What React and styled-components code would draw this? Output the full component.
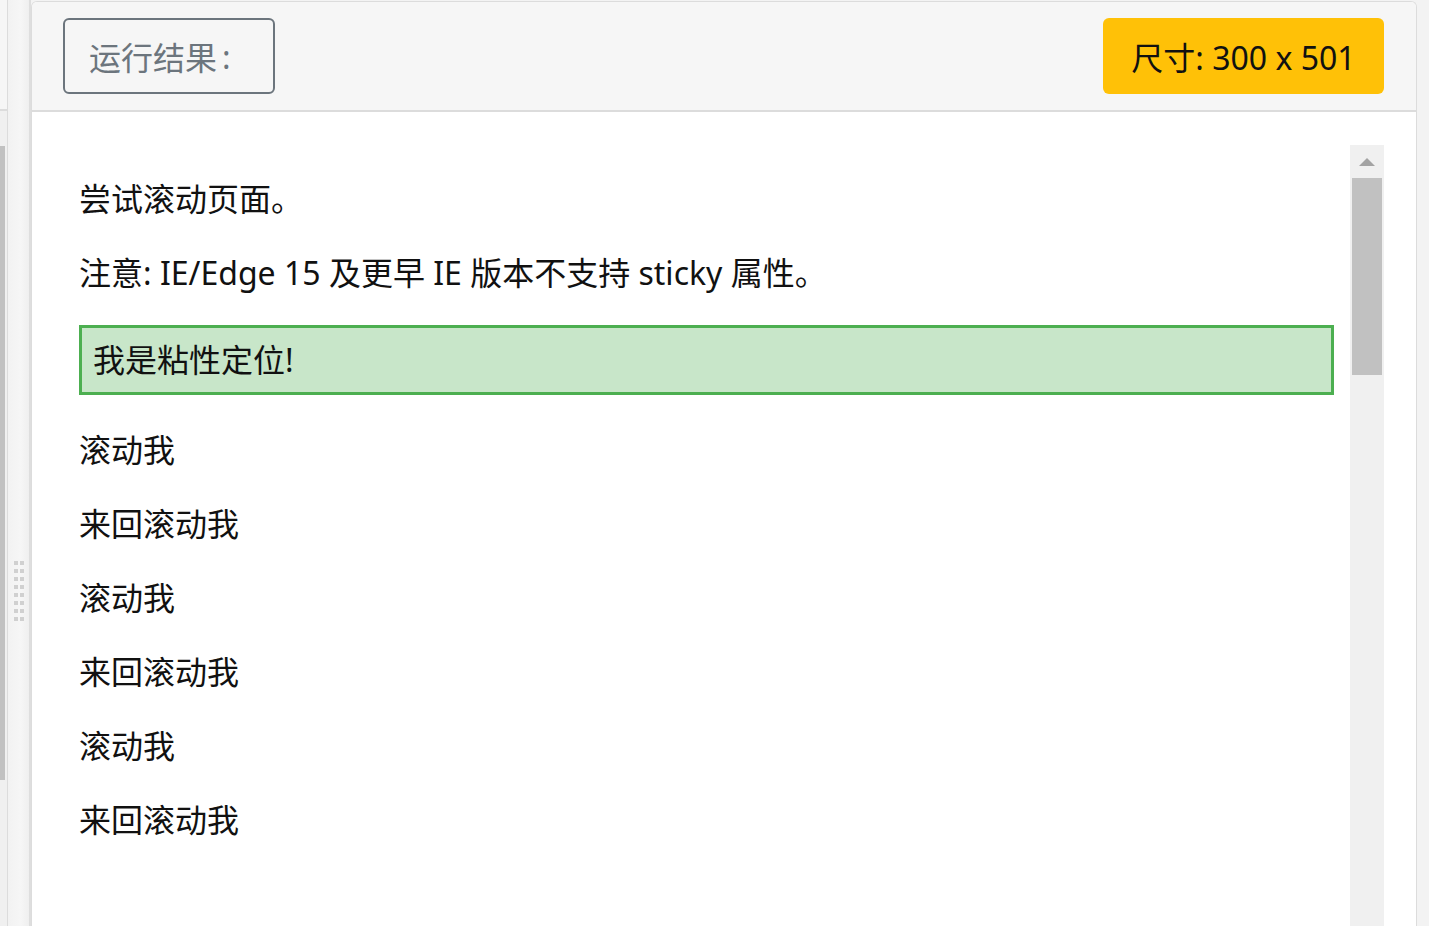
import React from 'react'
import styled, { createGlobalStyle } from 'styled-components'

const GlobalStyle = createGlobalStyle`
    html, body {
        margin: 0;
        padding: 0;
        background: #f3f3f3;
        font-family: "Noto Sans", "Noto Sans CJK SC", sans-serif;
    }
`

const rows = ['滚动我', '来回滚动我', '滚动我', '来回滚动我', '滚动我', '来回滚动我']

function App() {
    return (
        <Page>
            <GlobalStyle />
            <LeftPane>
                <LeftHead />
                <LeftTrack>
                    <LeftThumb />
                </LeftTrack>
            </LeftPane>
            <Gutter>
                <Grip>
                    {Array.from({ length: 16 }).map((_, i) => <Dot key={i} />)}
                </Grip>
            </Gutter>
            <Panel>
                <Header>
                    <ResultButton>运行结果<Colon>:</Colon></ResultButton>
                    <SizeBadge>尺寸: 300 x 501</SizeBadge>
                </Header>
                <Body>
                    <Frame>
                        <Doc>
                            <Para>尝试滚动页面。</Para>
                            <Para>注意: IE/Edge 15 及更早 IE 版本不支持 sticky 属性。</Para>
                            <Sticky>我是粘性定位!</Sticky>
                            {rows.map((r, i) => <Para key={i}>{r}</Para>)}
                        </Doc>
                        <Scrollbar>
                            <ArrowUp>
                                <svg width="16" height="9" viewBox="0 0 16 9">
                                    <polygon points="0,9 8,1 16,9" fill="#a3a3a3" />
                                </svg>
                            </ArrowUp>
                            <Thumb />
                        </Scrollbar>
                    </Frame>
                </Body>
            </Panel>
            <RightPane />
        </Page>
    )
}

export default App

const Page = styled.div`
    display: flex;
    height: 926px;
    overflow: hidden;
    background: #f3f3f3;
`

const LeftPane = styled.div`
    display: flex;
    flex-direction: column;
    width: 7px;
    background: #f0f0f0;
    border-right: 1px solid #dcdcdc;
`

const LeftHead = styled.div`
    height: 109px;
    background: #f6f6f6;
    border-bottom: 2px solid #dcdcdc;
`

const LeftTrack = styled.div`
    flex: 1;
    padding-top: 35px;
`

const LeftThumb = styled.div`
    width: 5px;
    height: 634px;
    background: #c1c1c1;
`

const Gutter = styled.div`
    display: flex;
    align-items: center;
    justify-content: center;
    box-sizing: border-box;
    width: 23px;
    background: linear-gradient(to right, #f2f2f2, #f6f6f6 60%, #efefef);
    border-right: 2px solid #dedede;
`

const Grip = styled.div`
    display: grid;
    grid-template-columns: 4px 4px;
    grid-auto-rows: 4px;
    column-gap: 2px;
    row-gap: 4px;
    margin-top: 256px;
`

const Dot = styled.div`
    background: #d0d0d0;
`

const Panel = styled.div`
    flex: 1;
    display: flex;
    flex-direction: column;
    background: #fff;
    border: 1px solid #dcdcdc;
    border-bottom: none;
    border-radius: 6px 6px 0 0;
    margin-top: 1px;
    overflow: hidden;
`

const Header = styled.div`
    display: flex;
    align-items: center;
    justify-content: space-between;
    box-sizing: border-box;
    flex-shrink: 0;
    height: 110px;
    padding: 0 32px 0 31px;
    background: #f6f6f6;
    border-bottom: 2px solid #dcdcdc;
`

const ResultButton = styled.div`
    display: flex;
    align-items: center;
    box-sizing: border-box;
    width: 212px;
    height: 76px;
    padding: 0 24px;
    border: 2px solid #6c757d;
    border-radius: 6px;
    color: #6c757d;
    font-size: 32px;
`

const Colon = styled.span`
    margin-left: 5px;
`

const SizeBadge = styled.div`
    display: flex;
    align-items: center;
    justify-content: center;
    box-sizing: border-box;
    width: 281px;
    height: 76px;
    background: #ffc107;
    border-radius: 6px;
    color: #111;
    font-size: 32px;
`

const Body = styled.div`
    flex: 1;
    padding: 33px 32px 0 31px;
`

const Frame = styled.div`
    display: flex;
    height: 100%;
`

const Doc = styled.div`
    flex: 1;
    padding: 2px 16px 0;
    color: #111;
    font-size: 32px;
    line-height: 44px;
`

const Para = styled.p`
    margin: 30px 0;
`

const Sticky = styled.div`
    height: 70px;
    box-sizing: border-box;
    padding: 0 11px;
    display: flex;
    align-items: center;
    background: #c8e6c9;
    border: 3px solid #4caf50;
    & + p { margin-top: 33px; }
`

const Scrollbar = styled.div`
    display: flex;
    flex-direction: column;
    align-items: center;
    width: 34px;
    background: #f0f0f0;
`

const ArrowUp = styled.div`
    display: flex;
    align-items: center;
    justify-content: center;
    height: 33px;
`

const Thumb = styled.div`
    width: 30px;
    height: 197px;
    background: #c1c1c1;
`

const RightPane = styled.div`
    width: 12px;
    background: #f3f3f3;
`
